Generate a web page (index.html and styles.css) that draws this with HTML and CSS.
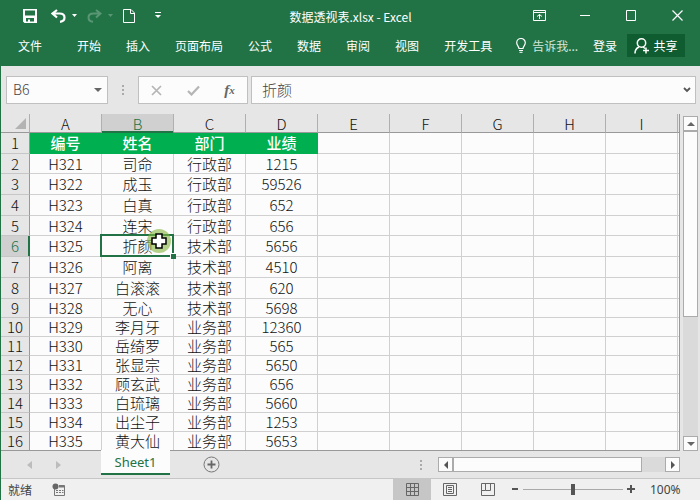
FILE: index.html
```html
<!DOCTYPE html>
<html lang="zh-CN">
<head>
    <meta charset="UTF-8">
    <meta name="viewport" content="width=device-width, initial-scale=1.0">
    <title>数据透视表.xlsx - Excel</title>
    <link rel="stylesheet" href="styles.css">
</head>
<body>
<div class="window">
    <header class="top">
        <div class="titlebar">
            <div class="quick">
                <button class="icon" aria-label="保存">
                    <svg width="14" height="14" viewBox="0 0 14 14"><path d="M0 0H14V14H1.500L0 12.500ZM2 1.500V6.500H12V1.500ZM3 9V12.500H5V10.500H7V12.500H11V9Z" fill="#fff" fill-rule="evenodd"/></svg>
                </button>
                <button class="icon" aria-label="撤消">
                    <svg width="15" height="14" viewBox="0 0 15 14"><path d="M6 1L1.500 4.500L6 8.500M2 4.500H8.500C12 4.500 13.500 6.500 13.500 8.500C13.500 11 11.500 12.500 9 12.800" fill="none" stroke="#fff" stroke-width="2.200"/></svg>
                </button>
                <button class="icon drop" aria-label="撤消列表"><svg width="5" height="4"><path d="M0 0H5L2.500 3Z" fill="#fff"/></svg></button>
                <button class="icon faded" aria-label="恢复">
                    <svg width="15" height="14" viewBox="0 0 15 14"><path d="M9 1L13.500 4.500L9 8.500M13 4.500H6.500C3 4.500 1.500 6.500 1.500 8.500C1.500 11 3.500 12.500 6 12.800" fill="none" stroke="#fff" stroke-width="2"/></svg>
                </button>
                <button class="icon drop faded" aria-label="恢复列表"><svg width="5" height="4"><path d="M0 0H5L2.500 3Z" fill="#fff"/></svg></button>
                <button class="icon" aria-label="新建">
                    <svg width="12" height="14"><path d="M.5 .5H8L11.500 4V13.500H.5Z M7.500 .5V4.500H11.500" fill="none" stroke="#fff"/></svg>
                </button>
                <button class="icon more" aria-label="自定义快速访问工具栏">
                    <svg width="6" height="7"><path d="M0 .5H6" stroke="#fff"/><path d="M0 3H6L3 6Z" fill="#fff"/></svg>
                </button>
            </div>
            <div class="title">数据透视表.xlsx - Excel</div>
            <div class="controls">
                <button aria-label="功能区显示选项"><svg width="13" height="11"><path d="M.5 .5H12.500V10.500H.5Z M.5 2.500H12.500 M6.500 9V4.500 M4 6.500L6.500 4.500L9 6.500" fill="none" stroke="#fff"/></svg></button>
                <button aria-label="最小化"><svg width="10" height="11"><path d="M0 5.500H10" stroke="#fff"/></svg></button>
                <button aria-label="最大化"><svg width="10" height="11"><path d="M.5 .5H9.500V10.500H.5Z" fill="none" stroke="#fff"/></svg></button>
                <button aria-label="关闭"><svg width="11" height="11"><path d="M.5 .5L10.500 10.500M10.500 .5L.5 10.500" stroke="#fff" stroke-width="1.200"/></svg></button>
            </div>
        </div>
        <nav class="ribbon">
            <a class="file" href="#file">文件</a>
            <div class="tabs">
                <a href="#home">开始</a>
                <a href="#insert">插入</a>
                <a href="#layout">页面布局</a>
                <a href="#formulas">公式</a>
                <a href="#data">数据</a>
                <a href="#review">审阅</a>
                <a href="#view">视图</a>
                <a href="#dev">开发工具</a>
            </div>
            <button class="tell">
                <svg width="10" height="15"><path d="M3 10.500C3 8.500 .7 7.500 .7 4.800A4.200 4.200 0 0 1 9.300 4.800C9.300 7.500 7 8.500 7 10.500Z" fill="none" stroke="#fff" stroke-width="1.200"/><path d="M3 12.500H7M3.500 14.300H6.500" stroke="#fff"/></svg>
                告诉我...
            </button>
            <div class="account">
                <a href="#login">登录</a>
                <button class="share">
                    <svg width="16" height="16"><circle cx="7.500" cy="5" r="4.200" fill="none" stroke="#fff" stroke-width="1.500"/><path d="M1 15.500C1 12 2.500 10 5 9M9 9L11 10.500M12 9.500V15.500M9 12.500H15" fill="none" stroke="#fff" stroke-width="1.500"/></svg>
                    共享
                </button>
            </div>
        </nav>
    </header>

    <div class="formula-bar">
        <div class="name-box">
            <input type="text" value="B6" aria-label="名称框">
            <button aria-label="名称列表"><svg width="8" height="5"><path d="M0 0H8L4 4Z" fill="#666"/></svg></button>
        </div>
        <div class="dots"><i></i><i></i><i></i></div>
        <div class="fx-box">
            <button aria-label="取消"><svg width="11" height="11"><path d="M1 1L10 10M10 1L1 10" stroke="#b5b5b5" stroke-width="1.700"/></svg></button>
            <button aria-label="输入"><svg width="13" height="11"><path d="M1 6L4.500 9.500L12 1.500" fill="none" stroke="#b5b5b5" stroke-width="2.200"/></svg></button>
            <button class="fx" aria-label="插入函数">f<small>x</small></button>
        </div>
        <div class="formula">
            <input type="text" value="折颜" aria-label="编辑栏">
            <button aria-label="展开编辑栏"><svg width="8" height="6"><path d="M1 1L4 4L7 1" fill="none" stroke="#555" stroke-width="1.800"/></svg></button>
        </div>
    </div>

    <main class="work">
        <div class="sheet">
            <table>
                <colgroup><col class="num"><col class="c"><col class="c"><col class="c"><col class="c"><col class="c"><col class="c"><col class="c"><col class="c"><col class="c"><col></colgroup>
                <thead>
                    <tr><th class="corner"><svg width="11" height="11"><path d="M11 0V11H0Z" fill="#b3b3b3"/></svg></th><th>A</th><th class="current">B</th><th>C</th><th>D</th><th>E</th><th>F</th><th>G</th><th>H</th><th>I</th><th></th></tr>
                </thead>
                <tbody>
                    <tr class="heading"><th>1</th><td>编号</td><td>姓名</td><td>部门</td><td>业绩</td><td></td><td></td><td></td><td></td><td></td><td></td></tr>
                    <tr class="short"><th>2</th><td>H321</td><td>司命</td><td>行政部</td><td>1215</td><td></td><td></td><td></td><td></td><td></td><td></td></tr>
                    <tr><th>3</th><td>H322</td><td>成玉</td><td>行政部</td><td>59526</td><td></td><td></td><td></td><td></td><td></td><td></td></tr>
                    <tr><th>4</th><td>H323</td><td>白真</td><td>行政部</td><td>652</td><td></td><td></td><td></td><td></td><td></td><td></td></tr>
                    <tr class="short"><th>5</th><td>H324</td><td>连宋</td><td>行政部</td><td>656</td><td></td><td></td><td></td><td></td><td></td><td></td></tr>
                    <tr><th class="current">6</th><td>H325</td><td class="selected">折颜<span class="handle"></span><span class="pointer"><svg width="16" height="16"><path d="M5 1H11V5H15V11H11V15H5V11H1V5H5Z" fill="#fff" stroke="#000" stroke-width="1.500"/></svg></span></td><td>技术部</td><td>5656</td><td></td><td></td><td></td><td></td><td></td><td></td></tr>
                    <tr><th>7</th><td>H326</td><td>阿离</td><td>技术部</td><td>4510</td><td></td><td></td><td></td><td></td><td></td><td></td></tr>
                    <tr><th>8</th><td>H327</td><td>白滚滚</td><td>技术部</td><td>620</td><td></td><td></td><td></td><td></td><td></td><td></td></tr>
                </tbody>
                <tbody class="compact">
                    <tr><th>9</th><td>H328</td><td>无心</td><td>技术部</td><td>5698</td><td></td><td></td><td></td><td></td><td></td><td></td></tr>
                    <tr><th>10</th><td>H329</td><td>李月牙</td><td>业务部</td><td>12360</td><td></td><td></td><td></td><td></td><td></td><td></td></tr>
                    <tr><th>11</th><td>H330</td><td>岳绮罗</td><td>业务部</td><td>565</td><td></td><td></td><td></td><td></td><td></td><td></td></tr>
                    <tr><th>12</th><td>H331</td><td>张显宗</td><td>业务部</td><td>5650</td><td></td><td></td><td></td><td></td><td></td><td></td></tr>
                    <tr><th>13</th><td>H332</td><td>顾玄武</td><td>业务部</td><td>656</td><td></td><td></td><td></td><td></td><td></td><td></td></tr>
                    <tr><th>14</th><td>H333</td><td>白琉璃</td><td>业务部</td><td>5660</td><td></td><td></td><td></td><td></td><td></td><td></td></tr>
                    <tr><th>15</th><td>H334</td><td>出尘子</td><td>业务部</td><td>1253</td><td></td><td></td><td></td><td></td><td></td><td></td></tr>
                    <tr><th>16</th><td>H335</td><td>黄大仙</td><td>业务部</td><td>5653</td><td></td><td></td><td></td><td></td><td></td><td></td></tr>
                </tbody>
            </table>
        </div>
        <div class="vscroll">
            <button aria-label="向上滚动"><svg width="8" height="4"><path d="M0 4H8L4 0Z" fill="#666"/></svg></button>
            <div class="track"><div class="thumb"></div></div>
            <button aria-label="向下滚动"><svg width="8" height="4"><path d="M0 0H8L4 4Z" fill="#666"/></svg></button>
        </div>
    </main>

    <div class="sheet-bar">
        <div class="sheet-nav">
            <button aria-label="上一个"><svg width="5" height="8"><path d="M5 0V8L0 4Z" fill="#bcbcbc"/></svg></button>
            <button aria-label="下一个"><svg width="5" height="8"><path d="M0 0V8L5 4Z" fill="#bcbcbc"/></svg></button>
        </div>
        <a class="sheet-tab" href="#sheet1">Sheet1</a>
        <button class="add" aria-label="新工作表"><svg width="17" height="17"><circle cx="8.500" cy="8.500" r="7.500" fill="none" stroke="#777"/><path d="M8.500 4.500V12.500M4.500 8.500H12.500" stroke="#666" stroke-width="1.800"/></svg></button>
        <div class="dots"><i></i><i></i><i></i></div>
        <div class="hscroll">
            <button aria-label="向左滚动"><svg width="4" height="8"><path d="M4 0V8L0 4Z" fill="#555"/></svg></button>
            <div class="track"><div class="thumb"></div></div>
            <button aria-label="向右滚动"><svg width="4" height="8"><path d="M0 0V8L4 4Z" fill="#555"/></svg></button>
        </div>
    </div>

    <footer class="status">
        <span>就绪</span>
        <button class="macro" aria-label="录制宏"><svg width="14" height="13"><path d="M2.500 6V12.500H12.500V2.500H7" fill="none" stroke="#777"/><path d="M7 3.500H12.500" stroke="#777" stroke-width="2"/><path d="M4 7.500H11.500M4 9.500H11.500" stroke="#777" stroke-dasharray="2 1"/><circle cx="3.500" cy="3.500" r="3" fill="#666"/></svg></button>
        <div class="views">
            <button class="active" aria-label="普通"><svg width="13" height="13"><path d="M.5 .5H12.500V12.500H.5ZM4.500 .5V12.500M8.500 .5V12.500M.5 4.500H12.500M.5 8.500H12.500" fill="none" stroke="#666"/></svg></button>
            <button aria-label="页面布局"><svg width="14" height="13"><path d="M.5 .5H13.500V12.500H.5ZM3.500 2.500H10.500V10.500H3.500ZM5 4.500H9M5 6.500H9M5 8.500H9" fill="none" stroke="#666"/></svg></button>
            <button aria-label="分页预览"><svg width="14" height="13"><path d="M.5 .5H13.500V12.500H.5ZM4.500 .5V7.500H9.500V.5M.5 7.500H4.500" fill="none" stroke="#666"/></svg></button>
        </div>
        <div class="zoom">
            <button aria-label="缩小"><svg width="8" height="8"><path d="M1 4H7" stroke="#555" stroke-width="2"/></svg></button>
            <input type="range" min="0" max="100" value="50" aria-label="缩放">
            <button aria-label="放大"><svg width="8" height="8"><path d="M0 4H8M4 0V8" stroke="#555" stroke-width="2"/></svg></button>
            <span class="percent">100%</span>
        </div>
    </footer>
</div>
</body>
</html>
```

FILE: styles.css
```css
* {
    box-sizing: border-box;
}

body {
    margin: 0;
    font-family: "Noto Sans CJK SC", sans-serif;
    font-size: 12px;
    font-weight: 300;
    color: #444;
}

button, input {
    font: inherit;
    color: inherit;
    background: none;
    border: none;
    padding: 0;
    margin: 0;
}

button {
    display: flex;
    align-items: center;
    justify-content: center;
}

a {
    color: inherit;
    text-decoration: none;
}

svg {
    display: block;
    flex: none;
}

.window {
    display: flex;
    flex-direction: column;
    height: 100vh;
    border-left: 1px solid #217346;
    background-color: #e6e6e6;
    overflow: hidden;
}

/* title bar and ribbon */
.top {
    flex: none;
    height: 66px;
    background-color: #217346;
    color: #fff;
    font-weight: 400;
}

.titlebar {
    display: grid;
    grid-template-columns: 1fr auto 1fr;
    align-items: center;
    height: 31px;
}

.title {
    padding-top: 2px;
}

.quick {
    display: flex;
    align-items: center;
    padding-left: 22px;
}

.icon {
    margin-right: 14px;
}

.icon:has(+ .drop) {
    margin-right: 6px;
}

.drop {
    margin-right: 10px;
}

.faded {
    opacity: 0.25;
}

.more {
    margin-left: 6px;
}

.controls {
    display: flex;
    justify-content: flex-end;
}

.controls button {
    width: 46px;
    height: 31px;
}

.ribbon {
    display: flex;
    align-items: center;
    height: 29px;
    padding: 0 15px 0 17px;
}

.tabs {
    display: flex;
    gap: 25px;
    margin-left: 35px;
}

.tell {
    gap: 6px;
    margin-left: 24px;
    color: #d5e6dc;
}

.account {
    display: flex;
    align-items: center;
    gap: 10px;
    margin-left: auto;
}

.share {
    gap: 3px;
    width: 58px;
    height: 23px;
    background-color: #0e5c2f;
}

/* formula bar */
.formula-bar {
    display: flex;
    flex: none;
    height: 48px;
    padding: 10px 4px 10px 5px;
    font-size: 14px;
}

.name-box, .fx-box, .formula {
    display: flex;
    align-items: center;
    border: 1px solid #c0c0c0;
    background-color: #fcfcfc;
}

.name-box {
    width: 102px;
    padding: 0 5px 0 6px;
}

.name-box input, .formula input {
    flex: 1;
    min-width: 0;
    height: 24px;
    padding-bottom: 2px;
}

.dots {
    display: flex;
    flex-direction: column;
    justify-content: center;
    gap: 2px;
}

.dots i {
    width: 2px;
    height: 2px;
    background-color: #aaa;
}

.formula-bar .dots {
    margin: 0 14px;
}

.fx-box {
    width: 110px;
    justify-content: space-around;
}

.fx {
    font: italic bold 15px "Liberation Serif", serif;
    color: #666;
}

.fx small {
    font-size: 11px;
}

.formula {
    flex: 1;
    margin-left: 3px;
    padding: 0 4px 0 10px;
    font-size: 15px;
}

/* worksheet */
.work {
    display: flex;
    flex: 1;
    min-height: 0;
}

.sheet {
    flex: 1;
    min-width: 0;
    overflow: hidden;
    border-right: 1px solid #999;
    border-bottom: 1px solid #999;
}

table {
    width: 100%;
    table-layout: fixed;
    border-collapse: separate;
    border-spacing: 0;
    font-size: 15px;
    line-height: 17px;
    color: #111;
}

.num {
    width: 29px;
}

.c {
    width: 72px;
}

th, td {
    height: 21px;
    padding: 0 0 1px;
    font-weight: 300;
    text-align: center;
    white-space: nowrap;
    border-right: 1px solid #d0d0d0;
    border-bottom: 1px solid #d0d0d0;
}

td {
    background-color: #fcfcfc;
}

.short th, .short td {
    height: 20px;
}

.compact th, .compact td {
    height: 19px;
}

thead th {
    height: 19px;
    padding: 1px 0 0;
    background-color: #e6e6e6;
    border-right-color: #b0b0b0;
    border-bottom-color: #999;
}

tbody th {
    background-color: #e6e6e6;
    border-right-color: #999;
    border-bottom-color: #c6c6c6;
}

th:last-child, td:last-child {
    border-right: none;
}

.corner svg {
    margin-left: auto;
    margin-right: 3px;
}

th.current {
    background-color: #d0d0d0;
    color: #217346;
}

thead th.current {
    border-bottom-color: #217346;
    box-shadow: inset 0 -1px #217346;
}

tbody th.current {
    border-right-color: #217346;
    box-shadow: inset -1px 0 #217346;
}

.heading td:nth-child(-n+5) {
    background-color: #00b050;
    border-color: #00b050;
    color: #fff;
    font-weight: 500;
}

.selected {
    position: relative;
}

.selected::after {
    content: "";
    position: absolute;
    inset: -2px -1px -1px -2px;
    border: 2px solid #217346;
}

.handle {
    position: absolute;
    right: -3px;
    bottom: -3px;
    z-index: 1;
    width: 6px;
    height: 6px;
    border: 1px solid #fff;
    border-width: 1px 0 0 1px;
    background-color: #217346;
}

.pointer {
    position: absolute;
    top: -7px;
    right: 2px;
    z-index: 2;
    display: flex;
    align-items: center;
    justify-content: center;
    width: 24px;
    height: 24px;
    border-radius: 50%;
    background-color: rgba(130, 180, 60, 0.6);
}

/* scroll bars */
.vscroll {
    display: flex;
    flex-direction: column;
    width: 15px;
    margin: 2px 2px 0 3px;
}

.vscroll button, .hscroll button {
    flex: none;
    width: 15px;
    height: 15px;
    border: 1px solid #ababab;
    background-color: #fcfcfc;
}

.track {
    flex: 1;
    background-color: #dadada;
}

.thumb {
    border: 1px solid #ababab;
    background-color: #fcfcfc;
}

.vscroll .thumb {
    height: 61%;
}

.hscroll .thumb {
    width: 89%;
    height: 15px;
}

.sheet-bar {
    display: flex;
    flex: none;
    align-items: center;
    height: 27px;
    padding-right: 20px;
}

.sheet-nav {
    display: flex;
    gap: 24px;
    width: 100px;
    padding-left: 26px;
}

.sheet-tab {
    align-self: flex-start;
    width: 69px;
    height: 25px;
    margin-top: -1px;
    border-bottom: 2px solid #217346;
    background-color: #fcfcfc;
    color: #217346;
    font-family: "Noto Sans", sans-serif;
    font-size: 13px;
    font-weight: 400;
    line-height: 24px;
    text-align: center;
}

.add {
    margin-left: 33px;
}

.sheet-bar .dots {
    margin-left: auto;
    margin-right: 16px;
}

.hscroll {
    display: flex;
    width: 242px;
}

/* status bar */
.status {
    display: flex;
    flex: none;
    align-items: center;
    height: 22px;
    padding: 0 0 1px 7px;
    border-top: 1px solid #c6c6c6;
    background-color: #f0f0f0;
    font-weight: 400;
}

.macro {
    margin-left: 20px;
}

.views {
    display: flex;
    height: 21px;
    margin-left: auto;
}

.views button {
    width: 38px;
}

.views .active {
    background-color: #c6c6c6;
}

.zoom {
    display: flex;
    align-items: center;
    width: 193px;
    padding-left: 4px;
}

.zoom input {
    appearance: none;
    width: 100px;
    height: 12px;
    margin: 0 4px;
    background: linear-gradient(#aaa, #aaa) center / 100% 1px no-repeat;
}

.zoom input::-webkit-slider-thumb {
    appearance: none;
    width: 4px;
    height: 11px;
    background-color: #555;
}

.percent {
    margin-left: 15px;
    font-family: "Noto Sans", sans-serif;
}
```
